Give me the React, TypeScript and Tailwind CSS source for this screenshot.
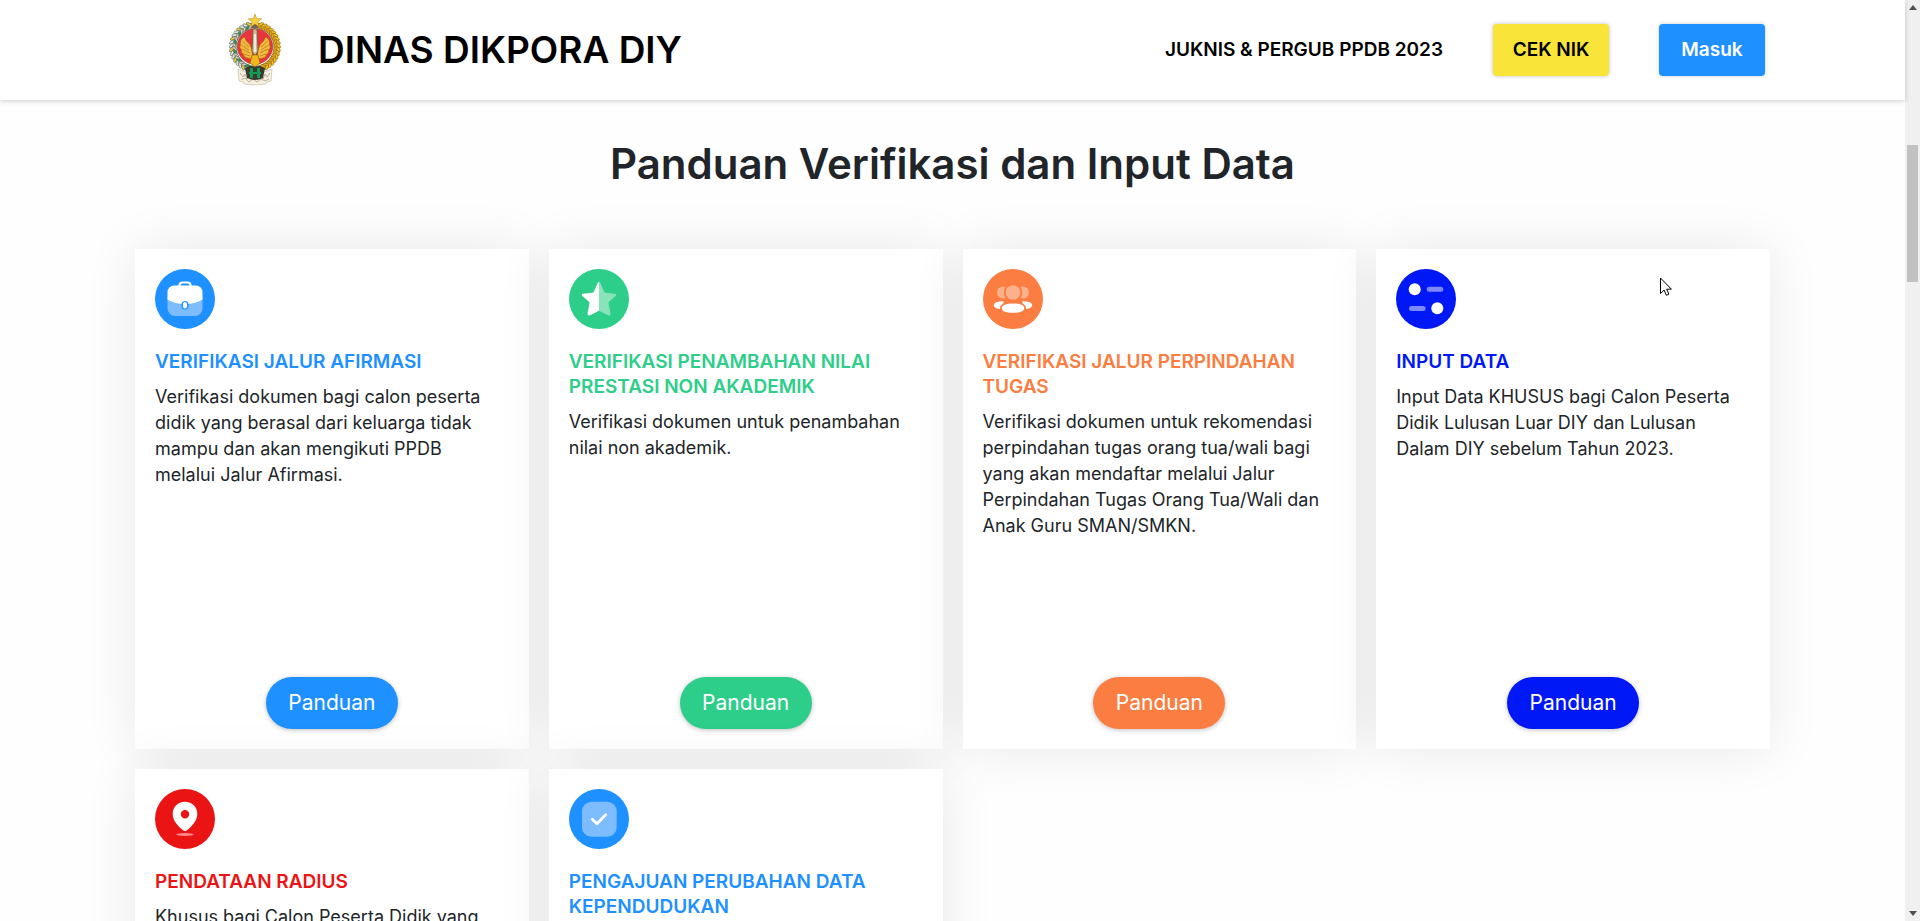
import type { ReactNode } from "react";

type Guide = {
  title: string;
  text: string;
  titleColor: string;
  fill: string;
  icon: ReactNode;
};

const guides: Guide[] = [
  {
    title: "VERIFIKASI JALUR AFIRMASI",
    text: "Verifikasi dokumen bagi calon peserta didik yang berasal dari keluarga tidak mampu dan akan mengikuti PPDB\nmelalui Jalur Afirmasi.",
    titleColor: "text-[#1e90ff]",
    fill: "bg-[#1e90ff]",
    icon: (
      <>
        <path d="M12.500 28v11.500a7.500 7.500 0 0 0 7.500 7.500h20a7.500 7.500 0 0 0 7.500-7.500V28z" fill="#7cbcff" />
        <path d="M24.500 18v-1.500a3 3 0 0 1 3-3h5a3 3 0 0 1 3 3V18" fill="none" stroke="#fff" strokeWidth="2.200" />
        <path d="M12.500 23a6.500 6.500 0 0 1 6.500-6.500h22a6.500 6.500 0 0 1 6.500 6.500v7.500Q40 35 30 35t-17.500-4.500z" fill="#fff" />
        <rect x="26.500" y="32" width="7" height="8.500" rx="3.500" fill="#1e90ff" />
        <rect x="28" y="33" width="4" height="6.500" rx="2" fill="#fff" />
      </>
    ),
  },
  {
    title: "VERIFIKASI PENAMBAHAN NILAI PRESTASI NON AKADEMIK",
    text: "Verifikasi dokumen untuk penambahan nilai non akademik.",
    titleColor: "text-[#2dce89]",
    fill: "bg-[#2dce89]",
    icon: (
      <>
        <path
          d="M30 13q-1 0-1.500 1.200L25 22.500q-.5 1.200-1.800 1.300L14 24.800q-2 .5-.6 2.200l6.300 5.500q1 .9.700 2.200L18.500 44.500q-.1 2.500 2 2L30 41.700z"
          fill="#fff"
        />
        <path
          d="M30 13q1 0 1.500 1.200L35 22.500q.5 1.200 1.800 1.300L46 24.800q2 .5.6 2.200l-6.300 5.500q-1 .9-.7 2.200L41.500 44.500q.1 2.500-2 2L30 41.700z"
          fill="#88e3ba"
        />
      </>
    ),
  },
  {
    title: "VERIFIKASI JALUR PERPINDAHAN TUGAS",
    text: "Verifikasi dokumen untuk rekomendasi perpindahan tugas orang tua/wali bagi yang akan mendaftar melalui Jalur Perpindahan Tugas Orang Tua/Wali dan Anak Guru SMAN/SMKN.",
    titleColor: "text-[#fb7d41]",
    fill: "bg-[#fb7d41]",
    icon: (
      <>
        <circle cx="20" cy="23.500" r="6" fill="#fcb18d" />
        <circle cx="40" cy="23.500" r="6" fill="#fcb18d" />
        <circle cx="30" cy="23.500" r="9.300" fill="#fb7d41" />
        <circle cx="30" cy="23.500" r="7.300" fill="#fcb18d" />
        <path d="M20.500 32q-9.500.3-9.800 4.300.3 4 9.800 4zM39.500 32q9.500.3 9.800 4.300-.3 4-9.800 4z" fill="#fff" />
        <path d="M30 32.500c8 0 13 2.500 13 6.700s-5 6.500-13 6.500-13-2.300-13-6.500 5-6.700 13-6.700z" fill="#fb7d41" />
        <path d="M30 34.500c7 0 11.200 1.600 11.200 4.700S37 43.800 30 43.800s-11.200-1.500-11.200-4.600S23 34.500 30 34.500z" fill="#fff" />
      </>
    ),
  },
  {
    title: "INPUT DATA",
    text: "Input Data KHUSUS bagi Calon Peserta Didik Lulusan Luar DIY dan Lulusan\nDalam DIY sebelum Tahun 2023.",
    titleColor: "text-[#0018f5]",
    fill: "bg-[#0018f5]",
    icon: (
      <>
        <circle cx="18.700" cy="20.300" r="6" fill="#fff" />
        <rect x="30.700" y="17.800" width="16.600" height="5" rx="2.500" fill="#7d88fa" />
        <rect x="13" y="37" width="16.600" height="5" rx="2.500" fill="#7d88fa" />
        <circle cx="41.300" cy="39.300" r="6" fill="#fff" />
      </>
    ),
  },
  {
    title: "PENDATAAN RADIUS",
    text: "Khusus bagi Calon Peserta Didik yang",
    titleColor: "text-[#eb1414]",
    fill: "bg-[#eb1414]",
    icon: (
      <>
        <ellipse cx="30" cy="45.500" rx="8.800" ry="1.500" fill="#f58a8a" />
        <path
          fillRule="evenodd"
          d="M30 12.700c-7 0-12.300 5.300-12.300 12 0 7.300 5.500 12.600 10.800 16.800q1.500 1 3 0c5.300-4.200 10.800-9.500 10.800-16.800 0-6.700-5.300-12-12.300-12zm0 8.300a4.200 4.200 0 1 1 0 8.400 4.200 4.200 0 0 1 0-8.400z"
          fill="#fff"
        />
      </>
    ),
  },
  {
    title: "PENGAJUAN PERUBAHAN DATA KEPENDUDUKAN",
    text: "",
    titleColor: "text-[#1e90ff]",
    fill: "bg-[#1e90ff]",
    icon: (
      <>
        <rect x="13" y="12.700" width="34.700" height="35" rx="9.500" fill="#7cbcff" />
        <path d="M23.300 30.300l4.700 4.400 8.700-9" fill="none" stroke="#fff" strokeWidth="2.800" strokeLinecap="round" strokeLinejoin="round" />
      </>
    ),
  },
];

const wreath = Array.from({ length: 17 }, (_, i) => 14 + i * 9);

function Emblem() {
  return (
    <svg viewBox="0 0 54 72" className="h-[72px] w-[54px]" role="img" aria-label="Lambang DIY">
      <path d="M10 55l5 2q12 5 24 0l5-2-1 12-4 1-1 2q-11 2-22 0l-1-2-4-1z" fill="#f6f0e2" stroke="#c9bfa8" strokeWidth=".7" />
      <path d="M12 59l3 4 2-3 2 5 3-4 3 5 2-4 2 4 3-5 3 4 2-5 2 3 3-4M13 66l4-2 4 4 4-3 4 3 4-3 4 2 4-2" fill="none" stroke="#ab9e82" strokeWidth=".8" />
      <circle cx="27" cy="33" r="21.500" fill="#fff" stroke="#6a6552" strokeWidth="5.500" />
      {wreath.map((a, i) => (
        <g key={a}>
          <g transform={`rotate(${a} 27 33)`}>
            <ellipse cx="27" cy="10" rx="1.500" ry="3.400" fill="#f6c428" stroke="#8a6414" strokeWidth=".6" transform="rotate(50 27 10)" />
            <ellipse cx="27" cy="12.500" rx="1.300" ry="2.600" fill="#e8a91c" stroke="#8a6414" strokeWidth=".5" transform="rotate(120 27 12.500)" />
          </g>
          <g transform={`rotate(${-a} 27 33)`}>
            <ellipse cx="27" cy="10" rx="1.500" ry="3.500" fill={i % 3 === 0 ? "#f0cb35" : "#e6e9e0"} stroke="#56605a" strokeWidth=".6" transform="rotate(-45 27 10)" />
            <ellipse cx="27" cy="12.500" rx="1.300" ry="2.600" fill={i % 3 === 1 ? "#2b9a4e" : "#cfd4c8"} stroke="#56605a" strokeWidth=".5" transform="rotate(-120 27 12.500)" />
          </g>
        </g>
      ))}
      <circle cx="27" cy="32.500" r="17.800" fill="#e8343a" stroke="#7a3a28" strokeWidth=".5" />
      <g fill="#f2bd3a" stroke="#a4661a" strokeWidth=".6">
        <path d="M24.500 43q-2 3-5 1-4 0-4-4-3-1-2-4-3-3-1-5-1-6 4-8 1 4 4 6 4 4 4 14z" />
        <path d="M29.500 43q2 3 5 1 4 0 4-4 3-1 2-4 3-3 1-5 1-6-4-8-1 4-4 6-4 4-4 14z" />
      </g>
      <path d="M14 27l7 6M13 31l8 5M14 35l8 4M16 40l6 2M40 27l-7 6M41 31l-8 5M40 35l-8 4M38 40l-6 2" stroke="#b5701f" strokeWidth=".7" />
      <path d="M25 15h4l1 22-3 5-3-5z" fill="#cdbb99" stroke="#69543a" strokeWidth=".8" />
      <path d="M27 20v18" stroke="#fff" strokeWidth="1.400" />
      <path d="M24 41h6l2 8-5 4-5-4z" fill="#f1b71d" stroke="#96620f" strokeWidth=".7" />
      <path d="M17 54l5-2 5 1 5-1 5 2-2 10q-8 4-16 0z" fill="#3b3a31" />
      <path d="M22 54h3v4h4v-4h3v4h1v2h-1v4h-3v-4h-4v4h-3v-4h-1v-2h1z" fill="#159a54" />
      <path d="M27 0l1.700 4.700 5 .1-3.900 3.100 1.400 4.900L27 10l-4.200 2.800 1.400-4.900-3.900-3.100 5-.1z" fill="#f9d13c" stroke="#b98518" strokeWidth=".6" />
    </svg>
  );
}

function GuideCard({ title, text, titleColor, fill, icon }: Guide) {
  return (
    <article className="flex h-[500px] flex-col bg-white p-5 shadow-[0_0_50px_rgba(0,0,0,0.09)]">
      <span className={`size-[60px] shrink-0 rounded-full ${fill}`}>
        <svg viewBox="0 0 60 60" className="size-full" aria-hidden="true">
          {icon}
        </svg>
      </span>
      <h3 className={`mt-5 text-[19px] leading-[25px] font-semibold ${titleColor}`}>{title}</h3>
      {text && <p className="mt-2.5 text-[18px] leading-[26px] whitespace-pre-line">{text}</p>}
      <button type="button" className={`mt-auto h-[52px] w-[132px] self-center rounded-full text-[21px] text-white shadow-[0_1px_5px_rgba(0,0,0,0.25)] ${fill}`}>
        Panduan
      </button>
    </article>
  );
}

export default function App() {
  return (
    <div className="flex h-screen overflow-hidden bg-[#fefefe] font-['Inter',sans-serif] text-[#212529]">
      <div className="min-w-0 flex-1">
        <header className="relative z-10 flex h-[100px] items-center justify-between bg-white pr-[140px] pl-[228px] shadow-[0_1px_5px_rgba(0,0,0,0.2)]">
          <a href="#beranda" className="flex items-center gap-9 text-[37px] font-semibold text-black">
            <Emblem />
            DINAS DIKPORA DIY
          </a>
          <nav className="flex items-center gap-[50px] text-[19px] font-semibold">
            <a href="#juknis" className="text-black">JUKNIS &amp; PERGUB PPDB 2023</a>
            <button type="button" className="h-[52px] w-[116px] rounded bg-[#f9e53a] text-black shadow-[0_0_4px_rgba(0,0,0,0.25)]">CEK NIK</button>
            <button type="button" className="h-[52px] w-[106px] rounded bg-[#1e90ff] text-white shadow-[0_0_4px_rgba(0,0,0,0.2)]">Masuk</button>
          </nav>
        </header>
        <main className="px-[135px] pt-10">
          <h2 className="text-center text-[42px] leading-[48px] font-semibold">Panduan Verifikasi dan Input Data</h2>
          <section className="mt-[61px] grid grid-cols-4 gap-5">
            {guides.map((g) => (
              <GuideCard key={g.title} {...g} />
            ))}
          </section>
        </main>
      </div>
      <div className="flex w-[15px] shrink-0 flex-col items-center justify-between bg-[#f0f0f0] py-[5px]" aria-hidden="true">
        <svg viewBox="0 0 8 5" className="h-[5px] w-2"><path d="M4 0l4 5H0z" fill="#505050" /></svg>
        <div className="mt-[135px] mb-auto h-[137px] w-[11px] bg-[#c1c1c1]" />
        <svg viewBox="0 0 8 5" className="h-[5px] w-2"><path d="M4 5L0 0h8z" fill="#505050" /></svg>
      </div>
      <svg viewBox="0 0 12 19" className="pointer-events-none absolute top-[277px] left-[1660px] z-20 h-[19px] w-3" aria-hidden="true">
        <path d="M.5 1v15.500l3.600-3.400 2.300 5.200 2.500-1.100-2.200-5h4.700z" fill="#fff" stroke="#000" />
      </svg>
    </div>
  );
}
